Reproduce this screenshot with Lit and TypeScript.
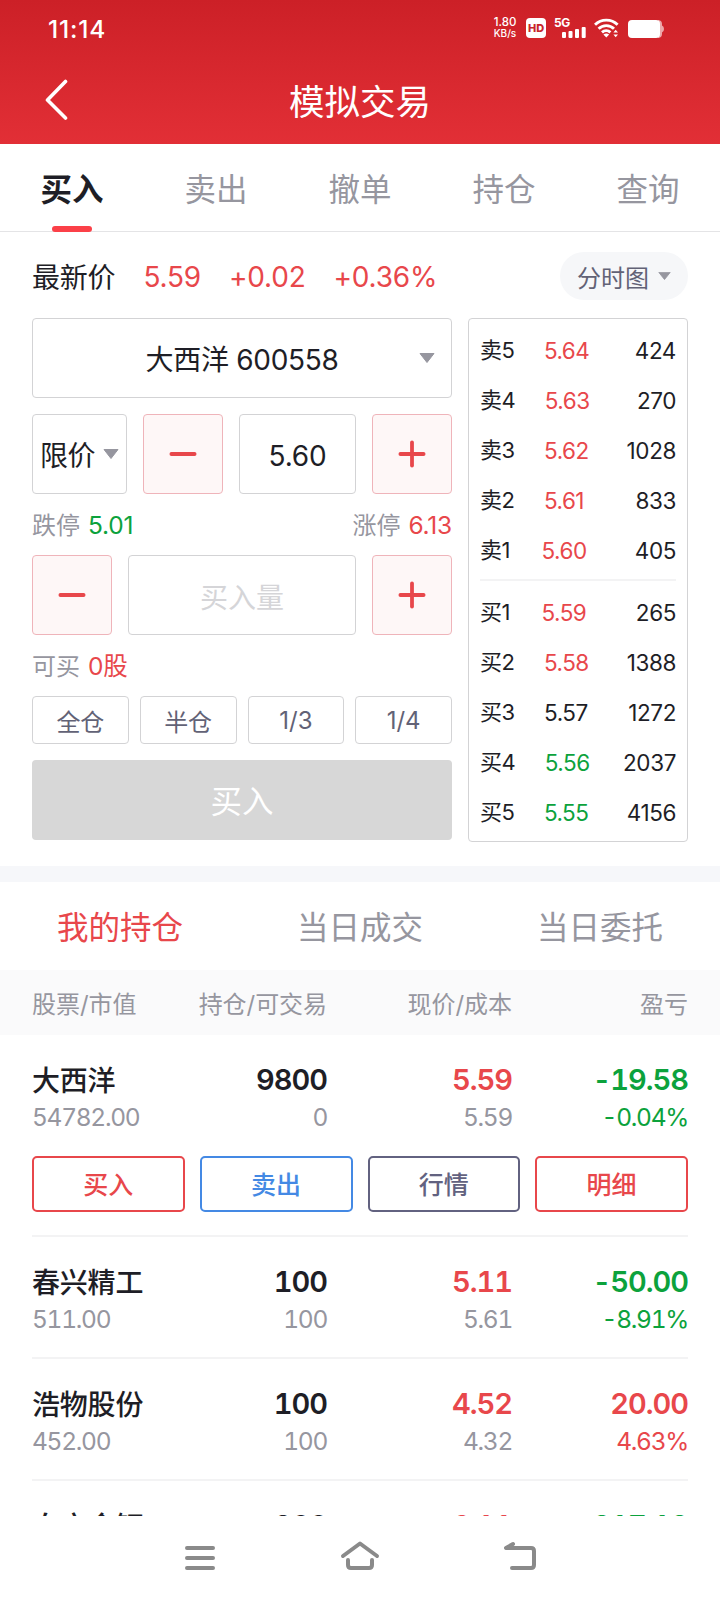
import { LitElement, html, css, svg } from "lit";
import { customElement } from "lit/decorators.js";
import { classMap } from "lit/directives/class-map.js";

type Tone = "up" | "down" | "flat";

interface Level {
  name: string;
  price: string;
  volume: string;
  tone: Tone;
}

interface Holding {
  name: string;
  value: string;
  amount: string;
  available: string;
  price: string;
  cost: string;
  profit: string;
  rate: string;
  tone: Tone;
  open?: boolean;
}

const TABS = ["买入", "卖出", "撤单", "持仓", "查询"];
const LISTS = ["我的持仓", "当日成交", "当日委托"];
const PORTIONS = ["全仓", "半仓", "1/3", "1/4"];

const ASKS: Level[] = [
  { name: "卖5", price: "5.64", volume: "424", tone: "up" },
  { name: "卖4", price: "5.63", volume: "270", tone: "up" },
  { name: "卖3", price: "5.62", volume: "1028", tone: "up" },
  { name: "卖2", price: "5.61", volume: "833", tone: "up" },
  { name: "卖1", price: "5.60", volume: "405", tone: "up" },
];

const BIDS: Level[] = [
  { name: "买1", price: "5.59", volume: "265", tone: "up" },
  { name: "买2", price: "5.58", volume: "1388", tone: "up" },
  { name: "买3", price: "5.57", volume: "1272", tone: "flat" },
  { name: "买4", price: "5.56", volume: "2037", tone: "down" },
  { name: "买5", price: "5.55", volume: "4156", tone: "down" },
];

const HOLDINGS: Holding[] = [
  { name: "大西洋", value: "54782.00", amount: "9800", available: "0", price: "5.59", cost: "5.59", profit: "-19.58", rate: "-0.04%", tone: "down", open: true },
  { name: "春兴精工", value: "511.00", amount: "100", available: "100", price: "5.11", cost: "5.61", profit: "-50.00", rate: "-8.91%", tone: "down" },
  { name: "浩物股份", value: "452.00", amount: "100", available: "100", price: "4.52", cost: "4.32", profit: "20.00", rate: "4.63%", tone: "up" },
  { name: "白方金钰", value: "611.00", amount: "300", available: "300", price: "6.11", cost: "8.28", profit: "-217.18", rate: "-26.21%", tone: "down" },
];

const caret = (w: number, h: number) => html`
  <svg class="caret" width=${w} height=${h} viewBox="0 0 16 10" preserveAspectRatio="none">
    <path d="M1 .5h14L8 9.5z" fill="#96969f" stroke="#96969f" stroke-linejoin="round" />
  </svg>
`;

const sign = (plus: boolean) => html`
  <svg width="28" height="28" viewBox="0 0 28 28" fill="none" stroke="#e8474b" stroke-width="3.8" stroke-linecap="round">
    <path d="M2.4 14h23.2" />
    ${plus ? svg`<path d="M14 2.4v23.2" />` : null}
  </svg>
`;

@customElement("status-bar")
export class StatusBar extends LitElement {
  static styles = css`
    :host {
      display: flex;
      align-items: flex-start;
      height: 56px;
      padding: 0 56px 0 48px;
      color: #fff;
    }
    .time {
      flex: 1;
      font-size: 24.5px;
      line-height: 30px;
      padding-top: 14px;
      font-weight: 500;
      letter-spacing: 0.8px;
    }
    .speed {
      width: 26px;
      margin-top: 17px;
      margin-right: 8px;
      text-align: center;
      font-size: 11.5px;
      line-height: 11px;
      font-weight: 500;
      white-space: nowrap;
    }
    .unit {
      font-size: 10px;
    }
    .hd {
      width: 20px;
      height: 20px;
      margin-top: 18px;
      margin-right: 8px;
      border-radius: 4px;
      background: #fff;
      color: #c8252c;
      font-size: 11px;
      line-height: 20px;
      font-weight: 800;
      text-align: center;
      letter-spacing: -0.2px;
    }
    .cell {
      display: flex;
      width: 32px;
      margin-top: 18px;
      margin-right: 8px;
    }
    .gen {
      width: 8px;
      font-size: 12px;
      line-height: 10px;
      font-weight: 700;
      letter-spacing: -0.4px;
    }
    .wifi {
      margin-top: 18px;
      margin-right: 9px;
    }
    .battery {
      margin-top: 20px;
    }
  `;

  render() {
    return html`
      <div class="time">11:14</div>
      <div class="speed">1.80<div class="unit">KB/s</div></div>
      <div class="hd">HD</div>
      <div class="cell">
        <div class="gen">5G</div>
        <svg width="24" height="20" viewBox="0 0 24 20" fill="#fff">
          <rect x="0" y="14" width="4" height="6" rx="1" />
          <rect x="6.5" y="13" width="4" height="7" rx="1" />
          <rect x="13" y="11" width="4" height="9" rx="1" />
          <rect x="19.7" y="9" width="4" height="11" rx="1" />
        </svg>
      </div>
      <svg class="wifi" width="25" height="20" viewBox="0 0 25 20" fill="none" stroke="#fff" stroke-width="2.9">
        <path d="M1 6.8a16 16 0 0 1 22.6 0" />
        <path d="M4.6 10.8a11 11 0 0 1 15.4 0" />
        <path d="M8 14.4a6.2 6.2 0 0 1 8.4 0" />
        <path d="M9.4 16.6q2.9-2.2 5.8 0L12.3 19.6z" fill="#fff" stroke="none" />
        <path d="M19.4 14.6l2.3-2.8 2.3 2.8zM19.4 16.4l2.3 2.8 2.3-2.8z" fill="#fff" stroke="none" />
      </svg>
      <svg class="battery" width="36" height="18" viewBox="0 0 36 18">
        <path d="M30 0h.5a4 4 0 0 1 3.5 4v1.5q2 .6 2 3.5t-2 3.500V14a4 4 0 0 1-3.500 4H30z" fill="#fff" opacity=".6" />
        <rect width="32" height="18" rx="4" fill="#fff" />
      </svg>
    `;
  }
}

@customElement("order-book")
export class OrderBook extends LitElement {
  static styles = css`
    :host {
      display: block;
      box-sizing: border-box;
      height: 524px;
      padding: 6px 11px 7px;
      border: 1px solid #d3d3d5;
      border-radius: 4px;
      font-size: 22.5px;
      color: #1e1e26;
    }
    .row {
      display: flex;
      align-items: center;
      height: 50px;
    }
    .name {
      margin-right: 29.5px;
      font-size: 22px;
      line-height: 28px;
      padding-bottom: 1px;
      letter-spacing: -0.5px;
    }
    .price {
      flex: 1;
      padding-top: 1px;
      letter-spacing: -0.5px;
    }
    .tight {
      margin-left: 2px;
    }
    .volume {
      padding-top: 1px;
      letter-spacing: -0.4px;
    }
    .up {
      color: #e8474b;
    }
    .down {
      color: #0ca23c;
    }
    .rule {
      height: 2px;
      margin: 4px 0 6px;
      background: #f3f3f4;
    }
  `;

  private row(level: Level) {
    const tight = level.name.endsWith("1");
    return html`
      <div class="row">
        <span class="name">${level.name}</span>
        <span class=${classMap({ price: true, tight, [level.tone]: true })}>${level.price}</span>
        <span class="volume">${level.volume}</span>
      </div>
    `;
  }

  render() {
    return html`
      ${ASKS.map((l) => this.row(l))}
      <div class="rule"></div>
      ${BIDS.map((l) => this.row(l))}
    `;
  }
}

@customElement("trade-form")
export class TradeForm extends LitElement {
  static styles = css`
    :host {
      display: flex;
      flex-direction: column;
      width: 420px;
      color: #1e1e26;
      font-size: 28px;
    }
    .box {
      box-sizing: border-box;
      display: flex;
      align-items: center;
      justify-content: center;
      height: 80px;
      border: 1px solid #d3d3d5;
      border-radius: 4px;
      white-space: nowrap;
    }
    .stock {
      display: grid;
      grid-template-columns: 1fr 16px;
      padding: 0 16px;
      text-align: center;
      letter-spacing: -0.3px;
    }
    .code {
      padding: 0 0 0 16px;
    }
    .line {
      display: grid;
      gap: 16px;
    }
    .price-line {
      grid-template-columns: 95px 80px 1fr 80px;
      margin-top: 16px;
    }
    .amount-line {
      grid-template-columns: 80px 1fr 80px;
    }
    .kind {
      gap: 8px;
      letter-spacing: -0.6px;
    }
    .input {
      padding-top: 3px;
      letter-spacing: -0.2px;
    }
    .step {
      background: #fef7f7;
      border-color: #efb4ba;
    }
    .empty {
      padding-top: 1px;
      color: #d5d5d8;
    }
    .note {
      display: flex;
      justify-content: space-between;
      height: 61px;
      line-height: 62px;
      font-size: 24px;
      color: #96969f;
    }
    .note b {
      margin-left: 8px;
      font-size: 24.5px;
      font-weight: 400;
      letter-spacing: -0.2px;
    }
    .up {
      color: #e8474b;
    }
    .down {
      color: #0ca23c;
    }
    .portions {
      display: grid;
      grid-template-columns: repeat(4, 1fr);
      gap: 11px;
    }
    .portion {
      height: 48px;
      font-size: 24px;
      color: #626276;
    }
    .submit {
      height: 80px;
      margin-top: 16px;
      border-radius: 4px;
      background: #d7d7d7;
      color: #fff;
      font-size: 31.5px;
      line-height: 83px;
      text-align: center;
    }
  `;

  render() {
    return html`
      <div class="box stock"><span class="code">大西洋 600558</span>${caret(16, 10)}</div>
      <div class="line price-line">
        <div class="box kind">限价${caret(16, 10)}</div>
        <div class="box step">${sign(false)}</div>
        <div class="box input">5.60</div>
        <div class="box step">${sign(true)}</div>
      </div>
      <div class="note">
        <span>跌停<b class="down">5.01</b></span>
        <span>涨停<b class="up">6.13</b></span>
      </div>
      <div class="line amount-line">
        <div class="box step">${sign(false)}</div>
        <div class="box empty">买入量</div>
        <div class="box step">${sign(true)}</div>
      </div>
      <div class="note"><span>可买<b class="up">0股</b></span></div>
      <div class="portions">${PORTIONS.map((p) => html`<div class="box portion">${p}</div>`)}</div>
      <div class="submit">买入</div>
    `;
  }
}

@customElement("holding-list")
export class HoldingList extends LitElement {
  static styles = css`
    :host {
      display: block;
      color: #1e1e26;
    }
    .cols {
      display: grid;
      grid-template-columns: 145px 150px 185px 176px;
      text-align: right;
      white-space: nowrap;
    }
    .cols > :first-child {
      text-align: left;
    }
    .head {
      height: 65px;
      padding: 0 32px;
      line-height: 69px;
      background: #fafafb;
      color: #96969f;
      font-size: 24px;
      letter-spacing: -0.05px;
    }
    .rows {
      padding: 0 32px;
    }
    .item {
      padding: 25px 0 21px;
      border-bottom: 2px solid #f3f3f4;
    }
    .main {
      font-size: 29px;
      line-height: 39px;
      height: 40px;
      font-weight: 600;
      font-variant-numeric: tabular-nums;
      letter-spacing: -1px;
    }
    .name {
      font-size: 28px;
      line-height: 42px;
      font-weight: 500;
      letter-spacing: -0.2px;
    }
    .sub {
      font-size: 24.5px;
      line-height: 34px;
      color: #96969f;
      font-variant-numeric: tabular-nums;
      letter-spacing: -1.3px;
    }
    .up {
      color: #e8474b;
    }
    .down {
      color: #0ca23c;
    }
    .acts {
      display: grid;
      grid-template-columns: repeat(4, 1fr);
      gap: 15px;
      padding: 22px 0 2px;
    }
    .act {
      box-sizing: border-box;
      height: 56px;
      border: 2px solid;
      border-radius: 5px;
      text-align: center;
      font-size: 25px;
      line-height: 55px;
      font-weight: 500;
    }
    .sell {
      color: #4489e4;
    }
    .quote {
      color: #626280;
    }
  `;

  private item(h: Holding) {
    return html`
      <div class="item">
        <div class="cols main">
          <span class="name">${h.name}</span>
          <span>${h.amount}</span>
          <span class="up">${h.price}</span>
          <span class=${h.tone}>${h.profit}</span>
        </div>
        <div class="cols sub">
          <span>${h.value}</span>
          <span>${h.available}</span>
          <span>${h.cost}</span>
          <span class=${h.tone}>${h.rate}</span>
        </div>
        ${h.open
          ? html`<div class="acts">
              <div class="act up">买入</div>
              <div class="act sell">卖出</div>
              <div class="act quote">行情</div>
              <div class="act up">明细</div>
            </div>`
          : null}
      </div>
    `;
  }

  render() {
    return html`
      <div class="cols head">
        <span>股票/市值</span><span>持仓/可交易</span><span>现价/成本</span><span>盈亏</span>
      </div>
      <div class="rows">${HOLDINGS.map((h) => this.item(h))}</div>
    `;
  }
}

@customElement("app-root")
export class AppRoot extends LitElement {
  static styles = css`
    :host {
      display: flex;
      flex-direction: column;
      width: 720px;
      height: 1600px;
      overflow: hidden;
      background: #fff;
      color: #1e1e26;
      font-family: Inter, "Noto Sans CJK SC", sans-serif;
    }
    .top {
      flex: none;
      height: 144px;
      background: linear-gradient(#cc2027, #e22f36);
      color: #fff;
    }
    .title-bar {
      display: grid;
      grid-template-columns: 46px 1fr 46px;
      align-items: center;
      height: 88px;
      padding: 0 45px;
    }
    .title {
      height: 88px;
      font-size: 35.5px;
      line-height: 94px;
      text-align: center;
    }
    .tabs {
      flex: none;
      box-sizing: border-box;
      display: grid;
      grid-template-columns: repeat(5, 1fr);
      height: 88px;
      border-bottom: 1px solid #e4e4e6;
    }
    .tab {
      display: flex;
      flex-direction: column;
      align-items: center;
      justify-content: space-between;
      font-size: 31.5px;
      line-height: 91px;
      color: #96969f;
    }
    .tab span {
      height: 82px;
    }
    .tab.on {
      color: #1e1e26;
      font-weight: 700;
    }
    .tab.on::after {
      content: "";
      width: 40px;
      height: 6px;
      border-radius: 3px;
      background: #fb4048;
      margin-bottom: -1px;
    }
    .latest {
      flex: none;
      display: flex;
      align-items: center;
      gap: 28px;
      height: 48px;
      padding: 20px 32px 18px;
      font-size: 28px;
      letter-spacing: -0.2px;
    }
    .num {
      padding-top: 2px;
      color: #e8474b;
    }
    .chart {
      display: flex;
      align-items: center;
      justify-content: center;
      gap: 9px;
      width: 128px;
      height: 48px;
      margin-left: auto;
      border-radius: 24px;
      background: #f6f7f9;
      color: #626276;
      font-size: 24px;
      letter-spacing: 0;
    }
    .panel {
      flex: none;
      display: grid;
      grid-template-columns: 420px 220px;
      gap: 16px;
      padding: 0 32px 24px;
    }
    .band {
      flex: none;
      height: 16px;
      background: #f6f7fa;
    }
    .lists {
      flex: none;
      display: grid;
      grid-template-columns: repeat(3, 1fr);
      height: 88px;
      text-align: center;
      font-size: 31.5px;
      line-height: 92px;
      color: #96969f;
    }
    .lists .on {
      color: #e8474b;
    }
    .scroll {
      flex: 1;
      min-height: 0;
      overflow: hidden;
    }
    .nav {
      flex: none;
      display: flex;
      justify-content: center;
      gap: 120px;
      height: 84px;
      background: #fff;
    }
  `;

  render() {
    return html`
      <div class="top">
        <status-bar></status-bar>
        <div class="title-bar">
          <svg width="24" height="42" viewBox="0 0 24 42" fill="none" stroke="#fff" stroke-width="3.6" stroke-linecap="round" stroke-linejoin="round">
            <path d="M20.500 2.500L2.500 21l18 18" />
          </svg>
          <div class="title">模拟交易</div>
        </div>
      </div>
      <div class="tabs">
        ${TABS.map((t, i) => html`<div class=${classMap({ tab: true, on: i === 0 })}><span>${t}</span></div>`)}
      </div>
      <div class="latest">
        <span>最新价</span>
        <span class="num">5.59</span>
        <span class="num">+0.02</span>
        <span class="num">+0.36%</span>
        <div class="chart">分时图${caret(13, 8)}</div>
      </div>
      <div class="panel">
        <trade-form></trade-form>
        <order-book></order-book>
      </div>
      <div class="band"></div>
      <div class="lists">
        ${LISTS.map((t, i) => html`<div class=${classMap({ on: i === 0 })}>${t}</div>`)}
      </div>
      <div class="scroll"><holding-list></holding-list></div>
      <div class="nav">
        <svg width="40" height="84" viewBox="0 0 40 84" fill="none" stroke="#8a8a8a" stroke-width="4" stroke-linecap="round">
          <path d="M7 32h26M7 42h26M7 52h26" />
        </svg>
        <svg width="40" height="84" viewBox="0 0 40 84" fill="none" stroke="#8a8a8a" stroke-width="4" stroke-linecap="round" stroke-linejoin="round">
          <path d="M3 40L20 27.500L37 40" />
          <path d="M8 44v5q0 3 3 3h18q3 0 3-3v-5" />
        </svg>
        <svg width="40" height="84" viewBox="0 0 40 84" fill="none" stroke="#8a8a8a" stroke-width="4" stroke-linecap="round" stroke-linejoin="round">
          <path d="M13 28L6 32h25q3 0 3 3v14q0 3-3 3H12" />
        </svg>
      </div>
    `;
  }
}
